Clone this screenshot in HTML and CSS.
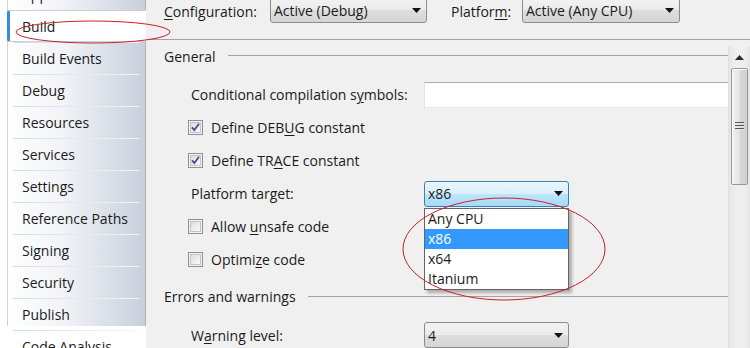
FILE: index.html
```html
<!DOCTYPE html>
<html>
<head>
<meta charset="utf-8">
<link rel="stylesheet" href="styles.css">
</head>
<body>
<div class="window">
  <nav class="sidebar">
    <div class="nav">
      <div class="nav-list">
        <div class="nav-item">Application</div>
        <div class="nav-item selected">Build</div>
        <div class="nav-item">Build Events</div>
        <div class="nav-item">Debug</div>
        <div class="nav-item">Resources</div>
        <div class="nav-item">Services</div>
        <div class="nav-item">Settings</div>
        <div class="nav-item">Reference Paths</div>
        <div class="nav-item">Signing</div>
        <div class="nav-item">Security</div>
        <div class="nav-item">Publish</div>
        <div class="nav-item">Code Analysis</div>
      </div>
    </div>
  </nav>

  <main class="main">
    <div class="topbar">
      <span class="toplabel config-label"><u>C</u>onfiguration:</span>
      <div class="combo top config-combo">
        <span class="combo-text">Active (Debug)</span>
        <svg class="arrow" width="9" height="5" viewBox="0 0 9 5"><path d="M0 0H9L4.5 5Z" fill="#111"/></svg>
      </div>
      <span class="toplabel platform-label">Platfor<u>m</u>:</span>
      <div class="combo top platform-combo">
        <span class="combo-text">Active (Any CPU)</span>
        <svg class="arrow" width="9" height="5" viewBox="0 0 9 5"><path d="M0 0H9L4.5 5Z" fill="#111"/></svg>
      </div>
    </div>

    <div class="body">
      <div class="content">
        <div class="section general">
          <span class="section-title">General</span>
          <span class="section-line"></span>
        </div>

        <div class="row">
          <span class="label">Conditional compilation s<u>y</u>mbols:</span>
          <div class="field"></div>
        </div>

        <div class="row check-row">
          <svg class="checkbox" width="15" height="15" viewBox="0 0 15 15">
            <defs>
              <linearGradient id="cbg" x1="0" y1="0" x2="1" y2="1">
                <stop offset="0" stop-color="#dcdcdc"/>
                <stop offset="1" stop-color="#fbfbfb"/>
              </linearGradient>
            </defs>
            <rect x="0.5" y="0.5" width="14" height="14" fill="#f4f4f4" stroke="#8f8f8f"/>
            <rect x="2.5" y="2.5" width="10" height="10" fill="url(#cbg)" stroke="#c2c2c2"/>
            <path d="M4 7.3L6.3 10L11 3.8" fill="none" stroke="#3e4f86" stroke-width="1.8"/>
          </svg>
          <span>Define DEB<u>U</u>G constant</span>
        </div>

        <div class="row check-row">
          <svg class="checkbox" width="15" height="15" viewBox="0 0 15 15">
            <rect x="0.5" y="0.5" width="14" height="14" fill="#f4f4f4" stroke="#8f8f8f"/>
            <rect x="2.5" y="2.5" width="10" height="10" fill="url(#cbg)" stroke="#c2c2c2"/>
            <path d="M4 7.3L6.3 10L11 3.8" fill="none" stroke="#3e4f86" stroke-width="1.8"/>
          </svg>
          <span>Define TR<u>A</u>CE constant</span>
        </div>

        <div class="row">
          <span class="label">Platform target:</span>
          <div class="combo-wrap">
            <div class="combo focused small">
              <span class="combo-text">x86</span>
              <svg class="arrow" width="9" height="5" viewBox="0 0 9 5"><path d="M0 0H9L4.5 5Z" fill="#111"/></svg>
            </div>
            <ul class="dropdown">
              <li>Any CPU</li>
              <li class="active">x86</li>
              <li>x64</li>
              <li>Itanium</li>
            </ul>
          </div>
        </div>

        <div class="row check-row">
          <svg class="checkbox" width="15" height="15" viewBox="0 0 15 15">
            <rect x="0.5" y="0.5" width="14" height="14" fill="#f4f4f4" stroke="#8f8f8f"/>
            <rect x="2.5" y="2.5" width="10" height="10" fill="url(#cbg)" stroke="#c2c2c2"/>
          </svg>
          <span>Allow <u>u</u>nsafe code</span>
        </div>

        <div class="row check-row">
          <svg class="checkbox" width="15" height="15" viewBox="0 0 15 15">
            <rect x="0.5" y="0.5" width="14" height="14" fill="#f4f4f4" stroke="#8f8f8f"/>
            <rect x="2.5" y="2.5" width="10" height="10" fill="url(#cbg)" stroke="#c2c2c2"/>
          </svg>
          <span>Optimi<u>z</u>e code</span>
        </div>

        <div class="section errors">
          <span class="section-title">Errors and warnings</span>
          <span class="section-line"></span>
        </div>

        <div class="row warn-row">
          <span class="label">W<u>a</u>rning level:</span>
          <div class="combo small">
            <span class="combo-text">4</span>
            <svg class="arrow" width="9" height="5" viewBox="0 0 9 5"><path d="M0 0H9L4.5 5Z" fill="#111"/></svg>
          </div>
        </div>
      </div>

      <div class="scrollbar">
        <div class="sb-button">
          <svg width="9" height="5" viewBox="0 0 9 5"><path d="M4.5 0L9 5H0Z" fill="#2a2a2a"/></svg>
        </div>
        <div class="sb-thumb">
          <span class="grip"></span>
        </div>
      </div>
    </div>
  </main>

  <svg class="annotations" width="750" height="348" viewBox="0 0 750 348">
    <ellipse cx="93" cy="32" rx="77" ry="11" fill="none" stroke="#cc1f2a" stroke-width="1"/>
    <ellipse cx="504" cy="249" rx="101" ry="51" fill="none" stroke="#cc1f2a" stroke-width="1"/>
  </svg>
</div>
</body>
</html>
```

FILE: styles.css
```css
* { box-sizing: border-box; }

html, body {
  margin: 0;
  padding: 0;
}

body {
  width: 750px;
  height: 348px;
  overflow: hidden;
  font-family: "Open Sans", "Noto Sans", sans-serif;
  font-size: 14px;
  color: #1b1b1b;
  background: #f0f0f0;
}

u { text-decoration: underline; text-underline-offset: 2px; }

.window {
  position: relative;
  display: flex;
  width: 750px;
  height: 348px;
  overflow: hidden;
}

/* ---------- sidebar ---------- */
.sidebar {
  width: 146px;
  flex: none;
  background: #ffffff;
  padding-left: 7px;
}

.nav {
  height: 100%;
  border-left: 1px solid #cfd4db;
  border-right: 1px solid #aab2be;
  background: linear-gradient(to right, #ffffff 0%, #f1f3f7 40%, #c8d0dc 100%);
}

.nav-list {
  margin-top: -22px;
}

.nav-item {
  position: relative;
  height: 32px;
  display: flex;
  align-items: center;
  padding-left: 14px;
  white-space: nowrap;
}

.nav-item::before {
  content: "";
  position: absolute;
  top: 0;
  left: 5px;
  right: 6px;
  height: 1px;
  background: linear-gradient(to right, #d6dae1, #f6f7fa);
}

.nav-item:first-child::before { display: none; }

.nav-item.selected {
  background: #ffffff;
  margin-left: -1px;
  margin-right: -1px;
  padding-left: 12px;
  border-left: 3px solid #3a8be2;
  border-top: 1px solid #cbd0d8;
  border-bottom: 1px solid #cbd0d8;
  border-radius: 3px 0 0 3px;
}

.nav-item.selected::before { display: none; }

/* ---------- main ---------- */
.main {
  flex: 1;
  min-width: 0;
  display: flex;
  flex-direction: column;
}

.topbar {
  flex: none;
  height: 40px;
  border-bottom: 1px solid #a3a3a3;
  display: flex;
  align-items: flex-start;
  padding-left: 18px;
}

.toplabel {
  margin-top: 2px;
  line-height: 20px;
  flex: none;
}

.config-label { width: 106px; }
.platform-label { width: 71px; margin-left: 24px; }

.combo {
  height: 26px;
  border: 1px solid #8b8b8b;
  border-radius: 3px;
  background: linear-gradient(#f3f3f3 0%, #ebebeb 50%, #dddddd 51%, #d6d6d6 100%);
  display: flex;
  align-items: center;
  justify-content: space-between;
  padding: 0 5px 0 3px;
  flex: none;
}

.combo.top { margin-top: -3px; }
.config-combo { width: 157px; }
.platform-combo { width: 158px; }

.combo.small { width: 145px; }

.combo.focused {
  border-color: #3c7fb1;
  background: linear-gradient(#eaf6fd 0%, #d9f0fc 50%, #bee6fd 51%, #a7d9f5 100%);
}

.combo-text { white-space: nowrap; }
.arrow { flex: none; }

.body {
  flex: 1;
  min-height: 0;
  display: flex;
}

.content {
  flex: 1;
  min-width: 0;
  overflow: hidden;
}

.section {
  display: flex;
  align-items: flex-start;
  padding-left: 18px;
}

.section.general {
  height: 38px;
  padding-top: 6px;
}

.section.errors {
  height: 44px;
  padding-top: 10px;
}

.section-title {
  line-height: 22px;
  white-space: nowrap;
}

.section-line {
  flex: 1;
  height: 1px;
  background: #a3a3a3;
  margin: 10px 0 0 12px;
}

.general .section-line { margin-top: 9px; }

.row {
  display: flex;
  align-items: center;
  height: 33px;
  padding-left: 45px;
  white-space: nowrap;
}

.row .label {
  width: 233px;
  flex: none;
}

.field {
  flex: none;
  width: 320px;
  height: 26px;
  background: #ffffff;
  border-top: 1px solid #abadb3;
  border-left: 1px solid #e2e3ea;
  border-bottom: 1px solid #e3e9ef;
}

.check-row { padding-left: 42px; }

.checkbox {
  flex: none;
  margin-right: 8px;
}

.combo-wrap {
  position: relative;
}

.dropdown {
  position: absolute;
  top: 100%;
  left: 0;
  width: 145px;
  margin: 1px 0 0;
  padding: 0;
  list-style: none;
  background: #ffffff;
  border: 1px solid #646464;
  box-shadow: 3px 3px 3px rgba(0, 0, 0, 0.28);
  z-index: 5;
}

.dropdown li {
  height: 20px;
  line-height: 20px;
  padding-left: 3px;
}

.dropdown li.active {
  background: #3399ff;
  color: #ffffff;
}

.warn-row { height: 30px; }

/* ---------- scrollbar ---------- */
.scrollbar {
  width: 22px;
  flex: none;
  margin-top: 6px;
  background: linear-gradient(to right, #e6e6e6, #efefef 30%, #eeeeee 80%, #e4e4e4);
  border-left: 1px solid #e0e0e0;
  display: flex;
  flex-direction: column;
  align-items: center;
}

.sb-button {
  height: 22px;
  width: 100%;
  display: flex;
  align-items: center;
  justify-content: center;
  padding-top: 1px;
}

.sb-thumb {
  width: 17px;
  height: 117px;
  border: 1px solid #979797;
  border-radius: 2px;
  background: linear-gradient(to right, #f1f1f1 0%, #e6e6e6 45%, #d6d6d6 55%, #d1d1d1 100%);
  box-shadow: inset 1px 1px 0 #fbfbfb;
  display: flex;
  align-items: center;
  justify-content: center;
}

.grip {
  width: 9px;
  height: 9px;
  background: repeating-linear-gradient(#555 0 1px, #e8e8e8 1px 2px, transparent 2px 3px);
}

/* ---------- annotations ---------- */
.annotations {
  position: absolute;
  left: 0;
  top: 0;
  pointer-events: none;
  z-index: 10;
}
```
